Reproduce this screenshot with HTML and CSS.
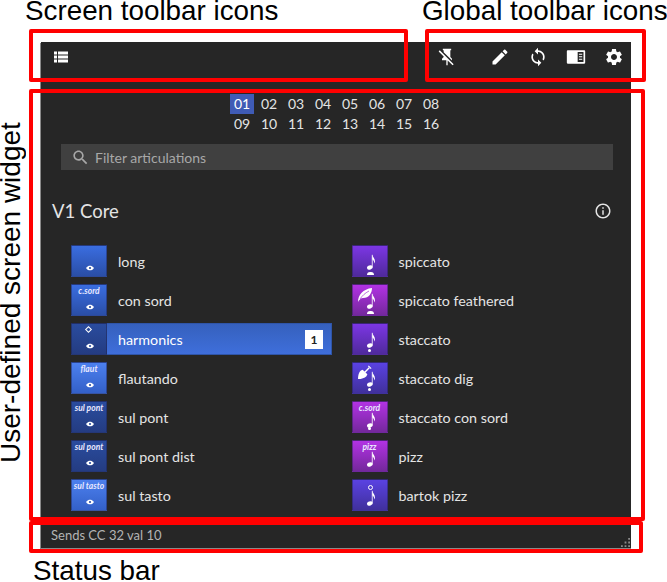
FILE: index.html
```html
<!DOCTYPE html>
<html lang="en">
<head>
  <meta charset="UTF-8">
  <title>Screen layout</title>
  <link rel="stylesheet" href="styles.css">
</head>
<body>
  <svg class="defs" width="0" height="0">
    <symbol id="eye" viewBox="0 0 12 8">
      <path fill="#fff" d="M0 4C2 1 4 .5 6 .5S10 1 12 4c-2 3-4 3.500-6 3.500S2 7 0 4z"/>
      <circle cx="6" cy="4" r="1.600" fill="#2a4ca0"/>
    </symbol>
    <symbol id="note" viewBox="0 0 12 24">
      <ellipse cx="4.500" cy="17" rx="3.600" ry="2.600" fill="#fff" transform="rotate(-20 4.500 17)"/>
      <path fill="none" stroke="#fff" stroke-width="1" d="M7.600 17V1"/>
      <path fill="#fff" d="M7.600 1c.4 3 3.400 4.500 3.400 8 0 1-.3 2-.8 3 0-3-1.400-4.500-2.600-5.500z"/>
    </symbol>
    <symbol id="feather" viewBox="0 0 14 14">
      <path fill="#fff" d="M0 14C0 7 5 1 14 0c0 5-3 10-9 10-2 0-4 2-5 4z"/>
      <path fill="none" stroke="#a030d0" stroke-width=".7" d="M2 11C4 8 7 5 11 3"/>
    </symbol>
    <symbol id="shovel" viewBox="0 0 16 16">
      <path fill="#fff" d="M0 16c0-4 1-7 3-9l2-1 5 5-1 2c-2 2-5 3-9 3z"/>
      <path fill="none" stroke="#fff" stroke-width="1.500" d="M7 9l5-5"/>
      <path fill="none" stroke="#fff" stroke-width="1.200" d="M11 2l3 3"/>
    </symbol>
  </svg>

  <div class="window">
    <header class="toolbar">
      <svg class="icon list-icon" viewBox="0 0 14 11"><path d="M0 0h3v3H0zM4 0h10v3H4zM0 4h3v3H0zM4 4h10v3H4zM0 8h3v3H0zM4 8h10v3H4z"/></svg>
      <div class="global-icons">
        <svg class="icon pin" viewBox="0 0 24 24"><path d="M2 5.270L3.280 4 20 20.720 18.730 22l-5.930-5.930V22h-1.600v-6H6v-2l2-2v-.73l-6-6M16 12l2 2v2h-.18L8 6.180V4H7V2h10v2h-1v8z"/></svg>
        <svg class="icon" viewBox="0 0 24 24"><path d="M3 17.250V21h3.750L17.810 9.940l-3.750-3.750L3 17.250zM20.710 7.040c.39-.39.39-1.020 0-1.410l-2.340-2.340c-.39-.39-1.020-.39-1.410 0l-1.830 1.830 3.750 3.750 1.830-1.830z"/></svg>
        <svg class="icon" viewBox="0 0 24 24"><path d="M12 4V1L8 5l4 4V6c3.310 0 6 2.690 6 6 0 1.010-.25 1.970-.7 2.800l1.460 1.460C19.540 15.030 20 13.570 20 12c0-4.420-3.580-8-8-8zm0 14c-3.310 0-6-2.690-6-6 0-1.010.25-1.970.7-2.800L5.240 7.740C4.460 8.970 4 10.430 4 12c0 4.420 3.580 8 8 8v3l4-4-4-4v3z"/></svg>
        <svg class="icon" viewBox="0 0 24 24"><path fill-rule="evenodd" d="M2 4h20a1 1 0 0 1 1 1v14a1 1 0 0 1-1 1H2a1 1 0 0 1-1-1V5a1 1 0 0 1 1-1zm12 2v12h7V6zm1.500 2h4v1.300h-4zm0 3h4v1.300h-4zm0 3h4v1.300h-4z"/></svg>
        <svg class="icon" viewBox="0 0 24 24"><path d="M19.140 12.940c.04-.3.060-.61.060-.94 0-.32-.02-.64-.07-.94l2.030-1.580c.18-.14.230-.41.120-.61l-1.920-3.320c-.12-.22-.37-.29-.59-.22l-2.390.96c-.5-.38-1.030-.7-1.620-.94l-.36-2.540c-.04-.24-.24-.41-.48-.41h-3.840c-.24 0-.43.170-.47.410l-.36 2.540c-.59.240-1.130.570-1.620.940l-2.390-.96c-.22-.08-.47 0-.59.220L2.740 8.870c-.12.210-.08.470.12.610l2.030 1.580c-.05.3-.09.630-.09.940s.02.640.07.940l-2.030 1.580c-.18.140-.23.410-.12.610l1.920 3.320c.12.220.37.290.59.220l2.390-.96c.5.380 1.030.7 1.620.94l.36 2.540c.05.240.24.410.48.410h3.840c.24 0 .44-.17.47-.41l.36-2.540c.59-.24 1.130-.56 1.620-.94l2.390.96c.22.080.47 0 .59-.22l1.920-3.320c.12-.22.070-.47-.12-.61l-2.010-1.580zM12 15.600c-1.980 0-3.600-1.620-3.600-3.600s1.620-3.600 3.600-3.600 3.600 1.620 3.600 3.600-1.620 3.600-3.600 3.600z"/></svg>
      </div>
    </header>

    <main class="widget">
      <div class="channels">
        <span class="channel active">01</span><span class="channel">02</span><span class="channel">03</span><span class="channel">04</span><span class="channel">05</span><span class="channel">06</span><span class="channel">07</span><span class="channel">08</span>
        <span class="channel">09</span><span class="channel">10</span><span class="channel">11</span><span class="channel">12</span><span class="channel">13</span><span class="channel">14</span><span class="channel">15</span><span class="channel">16</span>
      </div>

      <div class="filter">
        <svg class="search-icon" viewBox="0 0 24 24"><path d="M15.500 14h-.79l-.28-.27C15.410 12.590 16 11.110 16 9.500 16 5.910 13.090 3 9.500 3S3 5.910 3 9.500 5.910 16 9.500 16c1.610 0 3.090-.59 4.230-1.570l.27.280v.79l5 4.990L20.490 19l-4.990-5zm-6 0C7.010 14 5 11.990 5 9.500S7.010 5 9.500 5 14 7.010 14 9.500 11.990 14 9.500 14z"/></svg>
        <span>Filter articulations</span>
      </div>

      <div class="bank-title">
        <h2>V1 Core</h2>
        <svg class="info-icon" viewBox="0 0 24 24"><path d="M11 7h2v2h-2zm0 4h2v6h-2zm1-9C6.480 2 2 6.480 2 12s4.480 10 10 10 10-4.480 10-10S17.520 2 12 2zm0 18c-4.410 0-8-3.590-8-8s3.590-8 8-8 8 3.590 8 8-3.590 8-8 8z"/></svg>
      </div>

      <ul class="articulations">
        <li class="art"><div class="tile blue"><svg class="eye"><use href="#eye"/></svg></div><span>long</span></li>
        <li class="art"><div class="tile purple"><svg class="note"><use href="#note"/></svg><i class="dot low"></i></div><span>spiccato</span></li>

        <li class="art"><div class="tile blue"><em>c.sord</em><svg class="eye"><use href="#eye"/></svg></div><span>con sord</span></li>
        <li class="art"><div class="tile magenta"><svg class="extra feather"><use href="#feather"/></svg><svg class="note"><use href="#note"/></svg><i class="dot low"></i></div><span>spiccato feathered</span></li>

        <li class="art selected"><div class="tile deep"><i class="diamond"></i><svg class="eye"><use href="#eye"/></svg></div><span>harmonics</span><b class="badge">1</b></li>
        <li class="art"><div class="tile purple"><svg class="note"><use href="#note"/></svg><i class="dot"></i></div><span>staccato</span></li>

        <li class="art"><div class="tile light"><em>flaut</em><svg class="eye"><use href="#eye"/></svg></div><span>flautando</span></li>
        <li class="art"><div class="tile indigo"><svg class="extra shovel"><use href="#shovel"/></svg><svg class="note"><use href="#note"/></svg><i class="dot"></i></div><span>staccato dig</span></li>

        <li class="art"><div class="tile deep"><em>sul pont</em><svg class="eye"><use href="#eye"/></svg></div><span>sul pont</span></li>
        <li class="art"><div class="tile magenta"><em>c.sord</em><svg class="note"><use href="#note"/></svg><i class="dot"></i></div><span>staccato con sord</span></li>

        <li class="art"><div class="tile deep"><em>sul pont</em><svg class="eye"><use href="#eye"/></svg></div><span>sul pont dist</span></li>
        <li class="art"><div class="tile magenta"><em>pizz</em><svg class="note"><use href="#note"/></svg></div><span>pizz</span></li>

        <li class="art"><div class="tile light"><em>sul tasto</em><svg class="eye"><use href="#eye"/></svg></div><span>sul tasto</span></li>
        <li class="art"><div class="tile indigo"><i class="snap"></i><svg class="note lower"><use href="#note"/></svg></div><span>bartok pizz</span></li>

        <li class="art"><div class="tile deep"></div></li>
        <li class="art"><div class="tile magenta"></div></li>
      </ul>
    </main>

    <footer class="statusbar">
      <span>Sends CC 32 val 10</span>
      <svg class="grip" viewBox="0 0 10 10"><path d="M8 0h2v2H8zM4 4h2v2H4zM8 4h2v2H8zM0 8h2v2H0zM4 8h2v2H4zM8 8h2v2H8z"/></svg>
    </footer>
  </div>

  <!-- annotations on top of the screenshot -->
  <div class="note-label label-screen">Screen toolbar icons</div>
  <div class="note-label label-global">Global toolbar icons</div>
  <div class="note-label label-widget">User-defined screen widget</div>
  <div class="note-label label-status">Status bar</div>
  <div class="box box-screen"></div>
  <div class="box box-global"></div>
  <div class="box box-widget"></div>
  <div class="box box-status"></div>
</body>
</html>
```

FILE: styles.css
```css
html, body {
  height: 100%;
}
body {
  margin: 0;
  padding: 42px 36px 0 41px;
  box-sizing: border-box;
  background: #fff;
  font-family: Lato, "Noto Sans", sans-serif;
  overflow: hidden;
}
.defs {
  position: absolute;
}
.window {
  width: 590px;
  height: 507px;
  display: flex;
  flex-direction: column;
  background: #262626;
  color: #e4e4e4;
  box-shadow: -1px 1px 0 #8a8a8a;
}

/* toolbar */
.toolbar {
  flex: none;
  height: 36px;
  padding: 5px 7px 0 13px;
  display: flex;
  justify-content: space-between;
  align-items: flex-start;
}
.icon {
  width: 20px;
  height: 20px;
  fill: #fff;
  display: block;
}
.list-icon {
  width: 14px;
}
.global-icons {
  display: flex;
  gap: 18px;
}
.pin {
  margin-right: 15px;
}

/* widget */
.widget {
  flex: 1;
  min-height: 0;
  overflow: hidden;
}
.channels {
  width: 216px;
  margin: 11px 0 0 189px;
  display: grid;
  grid-template-columns: repeat(8, 27px);
  grid-auto-rows: 20px;
  font-size: 14px;
  text-align: center;
  line-height: 20px;
}
.channel {
  width: 24px;
}
.channel.active {
  background: #3f5bb5;
  color: #fff;
}
.filter {
  height: 26px;
  margin: 10px 18px 0 20px;
  padding-left: 10px;
  display: flex;
  align-items: center;
  gap: 5px;
  background: #404040;
  color: #a8a8a8;
  font-size: 14px;
}
.search-icon {
  width: 19px;
  height: 19px;
  fill: #a8a8a8;
}
.bank-title {
  margin: 29px 18px 0 11px;
  display: flex;
  justify-content: space-between;
  align-items: center;
}
.bank-title h2 {
  margin: 0;
  font-size: 18.500px;
  font-weight: 400;
  line-height: 24px;
}
.info-icon {
  width: 18px;
  height: 18px;
  fill: #e4e4e4;
  margin-right: 1px;
}
.articulations {
  list-style: none;
  margin: 22px 0 0 30px;
  padding: 0;
  display: grid;
  grid-template-columns: 261px 261px;
  grid-auto-rows: 32px;
  column-gap: 19.500px;
  row-gap: 7px;
}
.art {
  display: flex;
  align-items: center;
  gap: 11px;
  font-size: 14.300px;
}
.art.selected {
  background: linear-gradient(#3560bc, #3f6fdc);
  box-shadow: inset 0 0 0 1px #2f55a8;
  color: #fff;
}
.badge {
  margin: 0 9px 0 auto;
  width: 18px;
  height: 19px;
  background: #fff;
  color: #222;
  font-size: 12px;
  line-height: 19px;
  text-align: center;
}

/* articulation tiles */
.tile {
  position: relative;
  flex: none;
  width: 36px;
  height: 32px;
  box-sizing: border-box;
  border: 1px solid rgba(30, 30, 70, .45);
  text-align: center;
  color: #fff;
}
.tile em {
  display: block;
  font-size: 8.500px;
  font-weight: 700;
  line-height: 12px;
  white-space: nowrap;
  color: #e8e8ff;
}
.blue { background: linear-gradient(#3a6de0, #2a4ea6); }
.light { background: linear-gradient(#4c80ee, #3360c8); }
.deep { background: linear-gradient(#2a4c9e, #243c82); }
.purple { background: linear-gradient(#7c36e4, #4f2a9c); }
.magenta { background: linear-gradient(#b232e4, #74289c); }
.indigo { background: linear-gradient(#5a42e2, #40309c); }

.eye {
  position: absolute;
  left: 14px;
  bottom: 5px;
  width: 8px;
  height: 6px;
}
.note {
  position: absolute;
  left: 13px;
  top: 8px;
  width: 10px;
  height: 19px;
}
em + .note,
.note.lower {
  top: 10px;
}
.dot {
  position: absolute;
  left: 15px;
  bottom: 2px;
  width: 3px;
  height: 3px;
  border-radius: 50%;
  background: #fff;
}
.dot.low {
  left: 14px;
  bottom: 1px;
  width: 7px;
  height: 3px;
  border-radius: 4px 4px 0 0;
}
.extra {
  position: absolute;
  left: 5px;
  top: 3px;
}
.feather {
  width: 14px;
  height: 14px;
}
.shovel {
  top: 1px;
  width: 15px;
  height: 15px;
}
.diamond {
  position: absolute;
  left: 14px;
  top: 3px;
  width: 5px;
  height: 5px;
  box-sizing: border-box;
  border: 1.500px solid #fff;
  transform: rotate(45deg);
}
.snap {
  position: absolute;
  left: 15px;
  top: 5px;
  width: 5px;
  height: 5px;
  box-sizing: border-box;
  border: 1px solid #fff;
  border-radius: 50%;
}

/* status bar */
.statusbar {
  flex: none;
  height: 27px;
  padding: 0 0 0 10px;
  display: flex;
  justify-content: space-between;
  align-items: center;
  font-size: 13px;
  color: #b4b4b4;
  border-bottom: 1px solid #8a8a8a;
}
.grip {
  align-self: flex-end;
  width: 9px;
  height: 9px;
  margin: 0 1px 1px 0;
  fill: #8a8a8a;
}

/* annotations */
.note-label {
  position: absolute;
  font-family: "Liberation Sans", Arial, sans-serif;
  font-size: 27.800px;
  line-height: 22px;
  color: #000;
  white-space: nowrap;
}
.label-screen {
  left: 25px;
  top: 0;
}
.label-global {
  left: 422px;
  top: 0;
}
.label-status {
  left: 33px;
  top: 560px;
}
.label-widget {
  left: 0;
  top: 123px;
  height: 340px;
  font-size: 28px;
  writing-mode: vertical-rl;
  transform: rotate(180deg);
  text-align: center;
}
.box {
  position: absolute;
  box-sizing: border-box;
  border: 4px solid #f00;
  border-radius: 2px;
}
.box-screen {
  left: 29px;
  top: 29px;
  width: 379px;
  height: 53px;
}
.box-global {
  left: 425px;
  top: 29px;
  width: 221px;
  height: 53px;
}
.box-widget {
  left: 29px;
  top: 89px;
  width: 616px;
  height: 432px;
}
.box-status {
  left: 29px;
  top: 521px;
  width: 614px;
  height: 32px;
}
```
